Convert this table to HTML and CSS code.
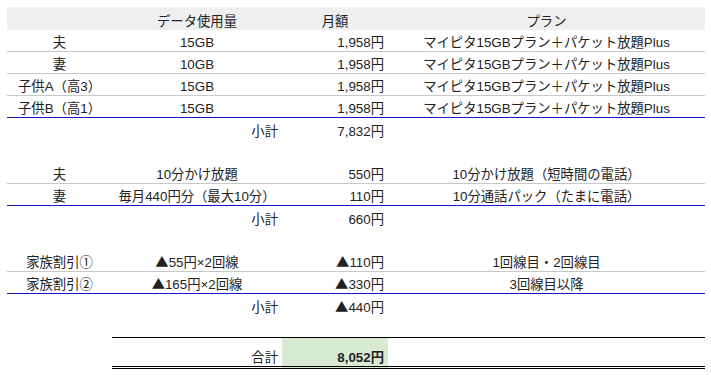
FILE: index.html
```html
<!DOCTYPE html>
<html lang="ja">
<head>
<meta charset="utf-8">
<title>料金表</title>
<link rel="stylesheet" href="styles.css">
</head>
<body>
<div class="sheet">
<table class="grid">
  <colgroup>
    <col class="c1"><col class="c2"><col class="c3"><col class="c4">
  </colgroup>
  <tr class="head">
    <td></td><td class="ctr">データ使用量</td><td class="ctr">月額</td><td class="ctr">プラン</td>
  </tr>
  <tr class="r line">
    <td class="ctr">夫</td><td class="ctr">15GB</td><td class="num">1,958円</td><td class="ctr">マイピタ15GBプラン＋パケット放題Plus</td>
  </tr>
  <tr class="r line">
    <td class="ctr">妻</td><td class="ctr">10GB</td><td class="num">1,958円</td><td class="ctr">マイピタ15GBプラン＋パケット放題Plus</td>
  </tr>
  <tr class="r line">
    <td class="ctr">子供A（高3）</td><td class="ctr">15GB</td><td class="num">1,958円</td><td class="ctr">マイピタ15GBプラン＋パケット放題Plus</td>
  </tr>
  <tr class="r blue">
    <td class="ctr">子供B（高1）</td><td class="ctr">15GB</td><td class="num">1,958円</td><td class="ctr">マイピタ15GBプラン＋パケット放題Plus</td>
  </tr>
  <tr class="r">
    <td></td><td class="num">小計</td><td class="num">7,832円</td><td></td>
  </tr>
  <tr class="r"><td></td><td></td><td></td><td></td></tr>
  <tr class="r line">
    <td class="ctr">夫</td><td class="ctr">10分かけ放題</td><td class="num">550円</td><td class="ctr">10分かけ放題（短時間の電話）</td>
  </tr>
  <tr class="r blue">
    <td class="ctr">妻</td><td class="ctr">毎月440円分（最大10分）</td><td class="num">110円</td><td class="ctr">10分通話パック（たまに電話）</td>
  </tr>
  <tr class="r">
    <td></td><td class="num">小計</td><td class="num">660円</td><td></td>
  </tr>
  <tr class="r"><td></td><td></td><td></td><td></td></tr>
  <tr class="r line">
    <td class="ctr">家族割引①</td><td class="ctr"><span class="tri">▲</span>55円×2回線</td><td class="num"><span class="tri">▲</span>110円</td><td class="ctr">1回線目・2回線目</td>
  </tr>
  <tr class="r blue">
    <td class="ctr">家族割引②</td><td class="ctr"><span class="tri">▲</span>165円×2回線</td><td class="num"><span class="tri">▲</span>330円</td><td class="ctr">3回線目以降</td>
  </tr>
  <tr class="r">
    <td></td><td class="num">小計</td><td class="num"><span class="tri">▲</span>440円</td><td></td>
  </tr>
  <tr class="r gap">
    <td></td><td class="top"></td><td class="top"></td><td class="top"></td>
  </tr>
  <tr class="total">
    <td class="nob"></td><td class="num">合計</td><td class="num sum">8,052円</td><td></td>
  </tr>
</table>
</div>
</body>
</html>
```

FILE: styles.css
```css
html, body {
  margin: 0;
  padding: 0;
  background: #ffffff;
}

.sheet {
  padding: 7px 0 0 7px;
}

.grid {
  border-collapse: separate;
  border-spacing: 0;
  table-layout: fixed;
  width: 698px;
  font-family: "Liberation Sans", "Noto Sans CJK JP", sans-serif;
  font-size: 13.33px;
  line-height: 17px;
  color: #222222;
}

.c1 { width: 105px; }
.c2 { width: 170px; }
.c3 { width: 106px; }
.c4 { width: 317px; }

.grid td {
  padding: 0 4px;
  vertical-align: bottom;
  white-space: nowrap;
  overflow: hidden;
}

.head {
  height: 23px;
  background: #efefef;
}

.r {
  height: 22px;
}

.line td {
  border-bottom: 1px solid #c8c8c8;
}

.blue td {
  border-bottom: 1px solid #1414c8;
}

.gap td.top {
  border-bottom: 1px solid #000000;
}

.total {
  height: 31px;
}

.total td {
  border-bottom: 3px double #000000;
}

.total td.nob {
  border-bottom: none;
}

.ctr {
  text-align: center;
}

.num {
  text-align: right;
}

.tri {
  font-family: "Noto Sans CJK JP", sans-serif;
  font-size: 13.33px;
}

.sum {
  background: #d9ead3;
  font-weight: bold;
}
```
